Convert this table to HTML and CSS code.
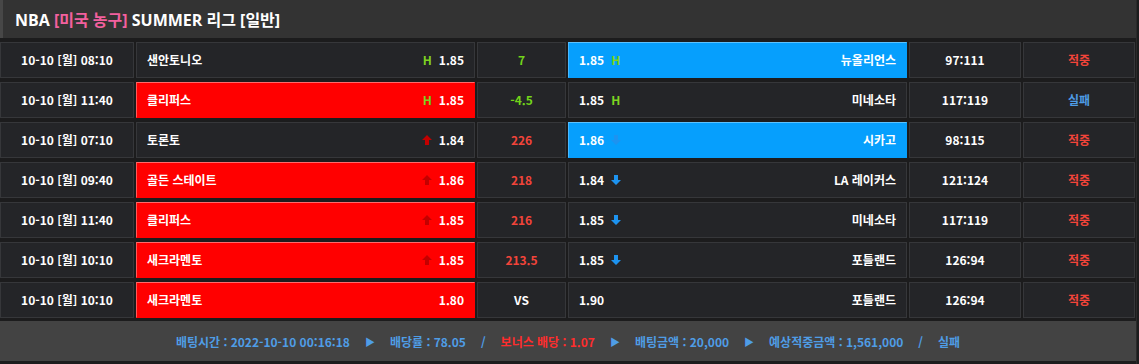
FILE: index.html
```html
<!DOCTYPE html>
<html lang="ko">
<head>
<meta charset="utf-8">
<link rel="stylesheet" href="styles.css">
</head>
<body>
<div class="board">
  <div class="title"><span class="title-text">NBA <span class="pink">[미국 농구]</span> SUMMER 리그 [일반]</span></div>
  <div class="rows">
    <div class="row">
      <div class="cell time">10-10 [월] 08:10</div>
      <div class="cell home"><span class="name">샌안토니오</span><span class="odd"><span class="h">H</span>1.85</span></div>
      <div class="cell mid green">7</div>
      <div class="cell away blue"><span class="odd">1.85<span class="h">H</span></span><span class="name">뉴올리언스</span></div>
      <div class="cell score">97:111</div>
      <div class="cell res hit">적중</div>
    </div>
    <div class="row">
      <div class="cell time">10-10 [월] 11:40</div>
      <div class="cell home red"><span class="name">클리퍼스</span><span class="odd"><span class="h">H</span>1.85</span></div>
      <div class="cell mid green">-4.5</div>
      <div class="cell away"><span class="odd">1.85<span class="h">H</span></span><span class="name">미네소타</span></div>
      <div class="cell score">117:119</div>
      <div class="cell res miss">실패</div>
    </div>
    <div class="row">
      <div class="cell time">10-10 [월] 07:10</div>
      <div class="cell home"><span class="name">토론토</span><span class="odd"><svg class="up" viewBox="0 0 10 10"><path d="M5 0 L10 5 H7 V10 H3 V5 H0 Z"/></svg>1.84</span></div>
      <div class="cell mid redtxt">226</div>
      <div class="cell away blue"><span class="odd">1.86<svg class="down" viewBox="0 0 10 10"><path d="M5 10 L10 5 H7 V0 H3 V5 H0 Z"/></svg></span><span class="name">시카고</span></div>
      <div class="cell score">98:115</div>
      <div class="cell res hit">적중</div>
    </div>
    <div class="row">
      <div class="cell time">10-10 [월] 09:40</div>
      <div class="cell home red"><span class="name">골든 스테이트</span><span class="odd"><svg class="up" viewBox="0 0 10 10"><path d="M5 0 L10 5 H7 V10 H3 V5 H0 Z"/></svg>1.86</span></div>
      <div class="cell mid redtxt">218</div>
      <div class="cell away"><span class="odd">1.84<svg class="down" viewBox="0 0 10 10"><path d="M5 10 L10 5 H7 V0 H3 V5 H0 Z"/></svg></span><span class="name">LA 레이커스</span></div>
      <div class="cell score">121:124</div>
      <div class="cell res hit">적중</div>
    </div>
    <div class="row">
      <div class="cell time">10-10 [월] 11:40</div>
      <div class="cell home red"><span class="name">클리퍼스</span><span class="odd"><svg class="up" viewBox="0 0 10 10"><path d="M5 0 L10 5 H7 V10 H3 V5 H0 Z"/></svg>1.85</span></div>
      <div class="cell mid redtxt">216</div>
      <div class="cell away"><span class="odd">1.85<svg class="down" viewBox="0 0 10 10"><path d="M5 10 L10 5 H7 V0 H3 V5 H0 Z"/></svg></span><span class="name">미네소타</span></div>
      <div class="cell score">117:119</div>
      <div class="cell res hit">적중</div>
    </div>
    <div class="row">
      <div class="cell time">10-10 [월] 10:10</div>
      <div class="cell home red"><span class="name">새크라멘토</span><span class="odd"><svg class="up" viewBox="0 0 10 10"><path d="M5 0 L10 5 H7 V10 H3 V5 H0 Z"/></svg>1.85</span></div>
      <div class="cell mid redtxt">213.5</div>
      <div class="cell away"><span class="odd">1.85<svg class="down" viewBox="0 0 10 10"><path d="M5 10 L10 5 H7 V0 H3 V5 H0 Z"/></svg></span><span class="name">포틀랜드</span></div>
      <div class="cell score">126:94</div>
      <div class="cell res hit">적중</div>
    </div>
    <div class="row">
      <div class="cell time">10-10 [월] 10:10</div>
      <div class="cell home red"><span class="name">새크라멘토</span><span class="odd">1.80</span></div>
      <div class="cell mid">VS</div>
      <div class="cell away"><span class="odd">1.90</span><span class="name">포틀랜드</span></div>
      <div class="cell score">126:94</div>
      <div class="cell res hit">적중</div>
    </div>
  </div>
  <div class="footer">
    <span>배팅시간 : 2022-10-10 00:16:18</span>
    <span class="tri">▶</span>
    <span>배당률 : 78.05</span>
    <span class="slash">/</span>
    <span class="bonus">보너스 배당 : 1.07</span>
    <span class="tri">▶</span>
    <span>배팅금액 : 20,000</span>
    <span class="tri">▶</span>
    <span>예상적중금액 : 1,561,000</span>
    <span class="slash">/</span>
    <span>실패</span>
  </div>
</div>
</body>
</html>
```
FILE: styles.css
```css
html, body {
  margin: 0;
  padding: 0;
  background: #1c1c1d;
}
body {
  font-family: "Noto Sans CJK KR", "Noto Sans", sans-serif;
  font-weight: 700;
  font-size: 12px;
  color: #ffffff;
}
.board {
  width: 1136px;
  height: 364px;
  background: #1c1c1d;
  border-right: 1px solid #2a2a2a;
}
.title {
  height: 38px;
  box-sizing: border-box;
  background: #333333;
  border-left: 3px solid #474747;
  padding-left: 12px;
  display: flex;
  align-items: center;
  font-family: "Open Sans", "Noto Sans CJK KR", sans-serif;
  font-size: 16px;
  color: #ffffff;
}
.title-text {
  white-space: pre;
}
.pink {
  color: #f2609e;
}
.rows {
  padding-top: 4px;
  display: flex;
  flex-direction: column;
  gap: 4px;
}
.row {
  display: grid;
  grid-template-columns: 134px 339px 89px 339px 112px 112px;
  column-gap: 2px;
  height: 36px;
}
.cell {
  box-sizing: border-box;
  background: #242528;
  border: 1px solid #36373a;
  display: flex;
  align-items: center;
  line-height: 1;
}
.time, .mid, .score, .res {
  justify-content: center;
}
.home, .away {
  justify-content: space-between;
  padding: 0 10px;
}
.red {
  background: #ff0000;
  border-color: #ff0000;
  border-top-color: #ff6a6a;
  border-left-color: #ff5a5a;
}
.blue {
  background: #069ffd;
  border-color: #069ffd;
  border-top-color: #5cc2ff;
  border-left-color: #4ab8ff;
}
.odd {
  display: flex;
  align-items: center;
}
.h {
  color: #7ed321;
  margin: 0 7px;
}
.home .h { margin-left: 0; }
.away .h { margin-right: 0; }
.up {
  width: 10px;
  height: 10px;
  fill: #c30000;
  margin-right: 7px;
}
.down {
  width: 10px;
  height: 10px;
  fill: #1d93f0;
  margin-left: 7px;
}
.green { color: #72d41a; }
.redtxt { color: #f2443a; }
.hit { color: #f2443a; }
.miss { color: #4e9ce6; }
.footer {
  margin-top: 3px;
  height: 40px;
  background: #434343;
  display: flex;
  align-items: center;
  justify-content: center;
  gap: 15px;
  color: #4f9de6;
  font-size: 12px;
}
.tri {
  font-size: 10px;
  color: #4f9de6;
}
.bonus { color: #ff2d2d; }
.slash { color: #4f9de6; }
```
